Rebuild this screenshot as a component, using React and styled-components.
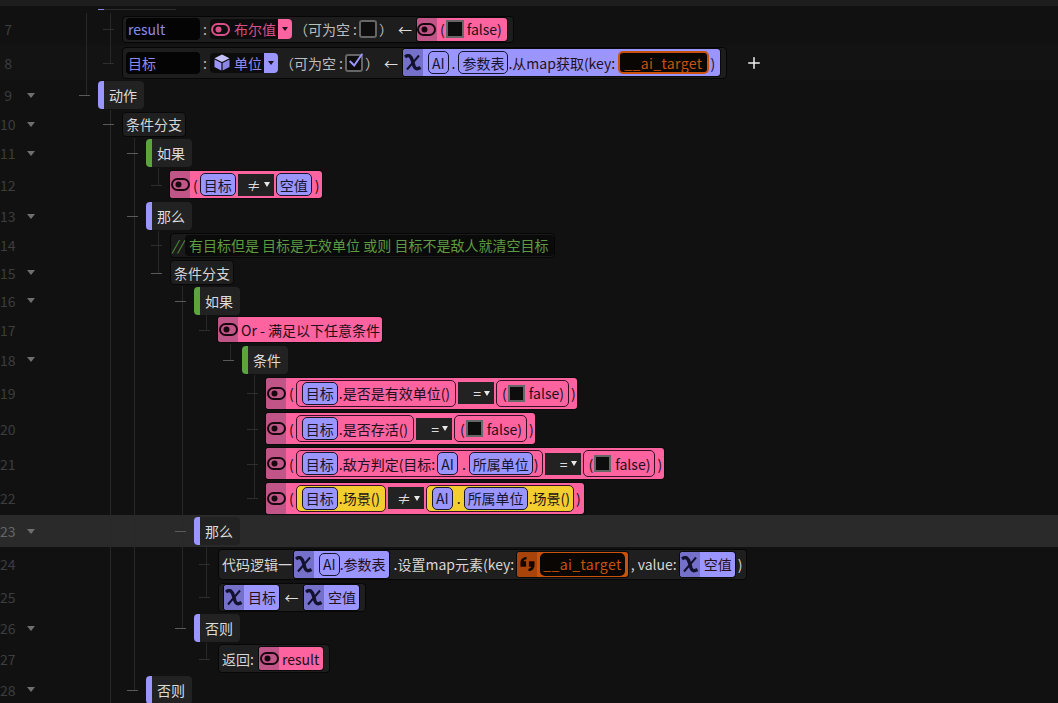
import React from 'react';
import styled, { createGlobalStyle, css } from 'styled-components';
import { Plus } from 'lucide-react';

const GlobalStyle = createGlobalStyle`
  html, body { margin: 0; padding: 0; background: #111111; }
  body { font-family: "Noto Sans CJK SC", "Noto Sans", sans-serif; font-size: 14px; overflow: hidden; }
`;

const tones = {
  pink: { bg: '#fc639f', cap: '#c25587' },
  purple: { bg: '#9b95ff', cap: '#7570c9' },
  yellow: { bg: '#f4cd2e', cap: '#f4cd2e' },
  orange: { bg: '#c9520d', cap: '#a84409' },
};

const Page = styled.div`
  width: 1058px;
  height: 703px;
  overflow: hidden;
  display: flex;
  flex-direction: column;
  background: #111111;
`;

const TopStrip = styled.div`
  height: 6px;
  flex: none;
  background: #1d1d1d;
`;

const Clipped = styled.div`
  height: 7px;
  flex: none;
  padding: 3px 0 0 98px;
  box-sizing: border-box;
  display: flex;
`;

const ClippedEnd = styled.div`
  width: 72px;
  height: 1px;
  background: #2c2c2c;
  border-left: 6px solid #8a85e6;
`;

const RowWrap = styled.div`
  flex: none;
  display: flex;
  align-items: center;
  height: ${p => p.$h}px;
  background: ${p => (p.$active ? '#2a2a2a' : p.$soft ? '#131313' : 'transparent')};
`;

const LineNo = styled.div`
  width: 12px;
  flex: none;
  text-align: right;
  color: ${p => (p.$active ? '#666' : '#3d3d3d')};
  font-size: 14px;
  line-height: 16px;
`;

const Fold = styled.div`
  width: 62px;
  flex: none;
  display: flex;
  justify-content: flex-start;
  padding-left: 15px;
  box-sizing: border-box;
`;

const Tri = styled.div`
  width: 0;
  height: 0;
  border-left: 4px solid transparent;
  border-right: 4px solid transparent;
  border-top: 5px solid #6f6f6f;
`;

const Indent = styled.div`
  display: flex;
  align-self: stretch;
  flex: none;
`;

const Cell = styled.div`
  width: 24px;
  position: relative;
  flex: none;
  ${p => (p.$kind === '|' || p.$kind === 'T') && css`
    &::before { content: ''; position: absolute; left: 12px; top: 0; bottom: 0; width: 1px; background: #272727; }
  `}
  ${p => p.$kind === 'L' && css`
    &::before { content: ''; position: absolute; left: 12px; top: 0; height: 50%; width: 1px; background: #272727; }
  `}
  ${p => (p.$kind === 'T' || p.$kind === 'L') && css`
    &::after { content: ''; position: absolute; left: 5px; top: 50%; width: 11px; height: 1px; background: ${p.$bright ? '#5a5a5a' : '#2e2e2e'}; }
  `}
`;

const Section = styled.div`
  display: flex;
  align-items: center;
  height: 28px;
  padding-right: 7px;
  background: #222222;
  border-radius: 4px;
  border-left: 6px solid ${p => (p.$green ? '#5aa53c' : '#9b95ff')};
  color: #dcdcdc;
  & > span { padding-left: 5px; }
`;

const Plain = styled.div`
  display: flex;
  align-items: center;
  height: ${p => p.$h || 25}px;
  padding: 0 ${p => p.$pr || 3}px 0 ${p => p.$pl || 3}px;
  background: #1f1f1f;
  border: 1px solid #070707;
  border-radius: 4px;
  color: #d6d6d6;
  white-space: nowrap;
  box-sizing: border-box;
`;

const Spacer = styled.span`
  width: ${p => p.$w}px;
  flex: none;
`;

const Expr = styled.div`
  display: flex;
  align-items: center;
  align-self: center;
  height: ${p => p.$h || 25}px;
  padding-right: ${p => (p.$pr === undefined ? 3 : p.$pr)}px;
  background: ${p => tones[p.$tone].bg};
  border-radius: 3px;
  box-shadow: 0 0 0 1px #0a0a0a;
  color: #22101a;
  white-space: nowrap;
  box-sizing: border-box;
  flex: none;
`;

const Cap = styled.div`
  width: 20px;
  align-self: stretch;
  flex: none;
  display: flex;
  align-items: center;
  justify-content: center;
  background: ${p => tones[p.$tone].cap};
  border-radius: 3px 0 0 3px;
  margin-right: ${p => (p.$mr === undefined ? 3 : p.$mr)}px;
`;

const Open = styled.span`
  margin-right: 2px;
`;

const Close = styled.span`
  margin-left: ${p => (p.$ml === undefined ? 2 : p.$ml)}px;
`;

const Chip = styled.div`
  height: 23px;
  padding: 0 3px;
  margin-left: ${p => p.$ml || 0}px;
  background: #9b95ff;
  border: 1px solid #15152e;
  border-radius: 5px;
  color: #15152e;
  display: flex;
  align-items: center;
  box-sizing: border-box;
  flex: none;
`;

const Group = styled.div`
  display: flex;
  align-items: center;
  height: 27px;
  padding: 0 ${p => (p.$pr === undefined ? 5 : p.$pr)}px 0 5px;
  border: 1px solid #3a0f25;
  border-radius: 5px;
  background: ${p => (p.$tone ? tones[p.$tone].bg : 'transparent')};
  box-sizing: border-box;
  & > ${Chip} { margin-right: 1px; }
`;

const Dot = styled.span`
  margin: 0 3px;
`;

const Op = styled.div`
  width: 36px;
  height: 22px;
  background: #222222;
  color: #dddddd;
  display: flex;
  align-items: center;
  justify-content: flex-end;
  gap: 3px;
  padding-right: 4px;
  box-sizing: border-box;
  margin: 0 2px;
  flex: none;
`;

const OpTri = styled.div`
  width: 0;
  height: 0;
  border-left: 3.5px solid transparent;
  border-right: 3.5px solid transparent;
  border-top: 5px solid #e8e8e8;
`;

const Check = styled.div`
  width: ${p => p.$size || 18}px;
  height: ${p => p.$size || 18}px;
  background: #0d0d0d;
  border: 2px solid #666666;
  border-radius: ${p => (p.$round ? 3 : 0)}px;
  box-sizing: border-box;
  margin: 0 ${p => (p.$m === undefined ? 2 : p.$m)}px;
  flex: none;
  display: flex;
  align-items: center;
  justify-content: center;
`;

const FalseText = styled.span`
  margin-left: ${p => p.$ml || 3}px;
`;

const NameField = styled.div`
  width: 74px;
  height: 22px;
  background: #040404;
  color: #8f8aef;
  border-radius: 4px;
  padding-left: 2px;
  box-sizing: border-box;
  display: flex;
  align-items: center;
`;

const Colon = styled.span`
  margin: 0 1px 0 3px;
`;

const TypeBox = styled.div`
  display: flex;
  align-items: center;
  height: 20px;
  gap: 4px;
  background: #0c0c0c;
  border-radius: 4px;
  padding-left: ${p => (p.$tone === 'pink' ? 1 : 4)}px;
  color: ${p => (p.$tone === 'pink' ? '#d94f88' : '#8f8aef')};
  margin-left: 2px;
`;

const TypeDrop = styled.div`
  width: 14px;
  align-self: stretch;
  margin-left: -2px;
  background: ${p => tones[p.$tone].bg};
  border-radius: 0 4px 4px 0;
  display: flex;
  align-items: center;
  justify-content: center;
  &::after {
    content: '';
    border-left: 3.5px solid transparent;
    border-right: 3.5px solid transparent;
    border-top: 4px solid #20101a;
  }
`;

const Nullable = styled.span`
  margin-left: 2px;
`;

const Decl = styled.div`
  display: flex;
  align-items: center;
  height: ${p => p.$h}px;
  padding: 0 6px 0 3px;
  background: #1d1d1d;
  border: 1px solid #060606;
  border-radius: 4px;
  box-sizing: border-box;
  color: #bdbdbd;
  white-space: nowrap;
`;

const Arrow = styled.span`
  margin: 0 ${p => p.$mx || 5}px;
  color: #dcdcdc;
`;

const KeyField = styled.div`
  height: 23px;
  padding: 0 ${p => (p.$bordered ? 4 : 3)}px;
  background: #0a0604;
  color: #c9520d;
  letter-spacing: 0.4px;
  border: ${p => (p.$bordered ? '2px solid #c9520d' : 'none')};
  border-radius: 5px;
  box-sizing: border-box;
  display: flex;
  align-items: center;
`;

const Comment = styled.div`
  display: flex;
  align-items: center;
  height: 25px;
  background: #1a1a1a;
  border: 1px solid #060606;
  border-radius: 4px;
  box-sizing: border-box;
  color: #5d9b41;
  white-space: nowrap;
`;

const Slashes = styled.span`
  font-style: italic;
  padding: 0 2px 0 1px;
`;

const CommentText = styled.span`
  background: #0a0a0a;
  height: 21px;
  display: flex;
  align-items: center;
  padding: 0 6px 0 4px;
  border-radius: 4px;
`;

const AddBtn = styled.div`
  margin-left: 18px;
  display: flex;
  color: #f0f0f0;
`;

const Eye = ({ color = '#17080f' }) => (
  <svg width="19" height="13" viewBox="0 0 19 13">
    <rect x="1" y="1" width="17" height="11" rx="5.5" fill="none" stroke={color} strokeWidth="2" />
    <circle cx="7.5" cy="6.5" r="3" fill={color} />
  </svg>
);

const Chi = () => (
  <svg width="18" height="17" viewBox="0 0 18 17">
    <path d="M1 3C5 0 7 2 8.5 7L10 12C11 15 13 15.5 16.5 13.5" fill="none" stroke="#12122e" strokeWidth="3.4" />
    <path d="M15 1.5L3 15.5" fill="none" stroke="#12122e" strokeWidth="2" />
  </svg>
);

const Cube = () => (
  <svg width="16" height="17" viewBox="0 0 16 17">
    <path d="M8 0.5L15.5 4.3L8 8L0.5 4.3Z" fill="#c4c1ff" />
    <path d="M0.5 5.4L7.4 9V16.6L0.5 13Z" fill="#9b95ff" />
    <path d="M15.5 5.4L8.6 9V16.6L15.5 13Z" fill="#8a85e6" />
  </svg>
);

const Quote = () => (
  <svg width="15" height="16" viewBox="0 0 16 16">
    <path d="M7 0.5C3 0.5 0.5 3 0.5 7V11H6.5V5H4C4.2 3.8 5.4 3 7 3Z" fill="#120803" />
    <path d="M9 15.5C13 15.5 15.5 13 15.5 9V5H9.5V11H12C11.8 12.2 10.6 13 9 13Z" fill="#120803" />
  </svg>
);

const CheckMark = () => (
  <svg width="20" height="20" viewBox="0 0 20 20" style={{ margin: '-6px -4px -2px 0' }}>
    <path d="M3 10L8 15L17 2" fill="none" stroke="#9b95ff" strokeWidth="2.2" />
  </svg>
);

const OpSel = ({ children }) => <Op>{children}<OpTri /></Op>;

const FalseExpr = () => (
  <Group $tone="pink" $pr={4}><span>(</span><Check $size={17} $m={1} /><FalseText>false)</FalseText></Group>
);

const Row = ({ n, h, fold, guides = '', bright, active, soft, children }) => (
  <RowWrap $h={h} $active={active} $soft={soft}>
    <LineNo $active={active}>{n}</LineNo>
    <Fold>{fold && <Tri />}</Fold>
    <Indent>
      {[...guides].map((g, i) => (
        <Cell key={i} $kind={g} $bright={bright && i === guides.length - 1} />
      ))}
    </Indent>
    {children}
  </RowWrap>
);

const Target = () => <Chip>目标</Chip>;
const NullVal = () => <Chip>空值</Chip>;

const VarExpr = ({ children, h = 25, mr = 4 }) => (
  <Expr $tone="purple" $h={h}><Cap $tone="purple" $mr={mr}><Chi /></Cap>{children}</Expr>
);

const PinkExpr = ({ children, h = 31, pr = 1 }) => (
  <Expr $tone="pink" $h={h} $pr={pr}><Cap $tone="pink"><Eye /></Cap>{children}</Expr>
);

export default function App() {
  return (
    <Page>
      <GlobalStyle />
      <TopStrip />
      <Clipped><ClippedEnd /></Clipped>
      <Row n="7" h={32} guides="|T">
        <Decl $h={27}>
          <NameField>result</NameField><Colon>:</Colon>
          <TypeBox $tone="pink"><Eye color="#d94f88" /><span>布尔值</span><TypeDrop $tone="pink" /></TypeBox>
          <Nullable>（可为空 :</Nullable><Check $size={18} $round /><span>）</span>
          <Arrow>←</Arrow>
          <Expr $tone="pink" $h={23} $pr={5}><Cap $tone="pink"><Eye /></Cap>(<Check $size={18} $m={1} /><FalseText $ml={2}>false)</FalseText></Expr>
        </Decl>
      </Row>
      <Row n="8" h={35} guides="|L" soft>
        <Decl $h={32}>
          <NameField>目标</NameField><Colon>:</Colon>
          <TypeBox $tone="purple"><Cube /><span>单位</span><TypeDrop $tone="purple" /></TypeBox>
          <Nullable>（可为空 :</Nullable><Check $size={18} $round><CheckMark /></Check><span>）</span>
          <Arrow>←</Arrow>
          <VarExpr h={27} mr={5}>
            <Chip>AI</Chip><Dot>.</Dot><Chip>参数表</Chip>.从map获取(key:&nbsp;
            <KeyField $bordered>__ai_target</KeyField><Close>)</Close><Spacer $w={2} />
          </VarExpr>
        </Decl>
        <AddBtn><Plus size={18} strokeWidth={2} /></AddBtn>
      </Row>
      <Row n="9" h={30} fold guides="L" bright><Section><span>动作</span></Section></Row>
      <Row n="10" h={28} fold guides=" T" bright><Plain>条件分支</Plain></Row>
      <Row n="11" h={30} fold guides=" |T" bright><Section $green><span>如果</span></Section></Row>
      <Row n="12" h={33} guides=" ||L">
        <PinkExpr h={27} pr={3}><Open>(</Open><Target /><Op>≠<OpTri /></Op><NullVal /><Close $ml={3}>)</Close></PinkExpr>
      </Row>
      <Row n="13" h={30} fold guides=" |T" bright><Section><span>那么</span></Section></Row>
      <Row n="14" h={28} guides=" ||T">
        <Comment><Slashes>//</Slashes><CommentText>有目标但是 目标是无效单位 或则 目标不是敌人就清空目标</CommentText></Comment>
      </Row>
      <Row n="15" h={27} fold guides=" ||L" bright><Plain>条件分支</Plain></Row>
      <Row n="16" h={29} fold guides=" || T" bright><Section $green><span>如果</span></Section></Row>
      <Row n="17" h={29} guides=" || |L">
        <PinkExpr h={25} pr={2}>Or - 满足以下任意条件</PinkExpr>
      </Row>
      <Row n="18" h={31} fold guides=" || | L" bright><Section $green><span>条件</span></Section></Row>
      <Row n="19" h={36} guides=" || |  T">
        <PinkExpr><Open>(</Open><Group><Target />.是否是有效单位()</Group><OpSel>=</OpSel><FalseExpr /><Close>)</Close></PinkExpr>
      </Row>
      <Row n="20" h={35} guides=" || |  T">
        <PinkExpr><Open>(</Open><Group><Target />.是否存活()</Group><OpSel>=</OpSel><FalseExpr /><Close>)</Close></PinkExpr>
      </Row>
      <Row n="21" h={35} guides=" || |  T">
        <PinkExpr pr={2}><Open>(</Open><Group $pr={3}><Target />.敌方判定(目标:<Chip $ml={2}>AI</Chip><Dot>.</Dot><Chip>所属单位</Chip><Close $ml={0}>)</Close></Group><OpSel>=</OpSel><FalseExpr /><Close>)</Close></PinkExpr>
      </Row>
      <Row n="22" h={34} guides=" || |  L">
        <PinkExpr pr={3}><Open>(</Open><Group $tone="yellow"><Target />.场景()</Group><OpSel>≠</OpSel><Group $tone="yellow" $pr={3}><Chip>AI</Chip><Dot>.</Dot><Chip>所属单位</Chip>.场景()</Group><Close>)</Close></PinkExpr>
      </Row>
      <Row n="23" h={32} fold guides=" || T" bright active><Section><span>那么</span></Section></Row>
      <Row n="24" h={34} guides=" || |T">
        <Plain $h={31}>
          代码逻辑一
          <Spacer $w={2} />
          <VarExpr h={27} mr={5}><Chip>AI</Chip>.参数表</VarExpr>
          <Spacer $w={5} />
          .设置map元素(key:&nbsp;
          <Expr $tone="orange" $h={25} $pr={3}><Cap $tone="orange"><Quote /></Cap><KeyField>__ai_target</KeyField></Expr>
          &nbsp;, value:&nbsp;
          <VarExpr h={25}>空值</VarExpr><Close $ml={3}>)</Close>
        </Plain>
      </Row>
      <Row n="25" h={32} guides=" || |L">
        <Plain $h={29} $pl={5} $pr={6}>
          <VarExpr>目标</VarExpr><Arrow $mx={5.5}>←</Arrow><VarExpr>空值</VarExpr>
        </Plain>
      </Row>
      <Row n="26" h={30} fold guides=" || L" bright><Section><span>否则</span></Section></Row>
      <Row n="27" h={31} guides=" ||  L">
        <Plain $h={29} $pr={6}>返回:&nbsp;<Spacer $w={2} /><PinkExpr h={23} pr={4}>result</PinkExpr></Plain>
      </Row>
      <Row n="28" h={31} fold guides=" |L" bright><Section><span>否则</span></Section></Row>
    </Page>
  );
}
